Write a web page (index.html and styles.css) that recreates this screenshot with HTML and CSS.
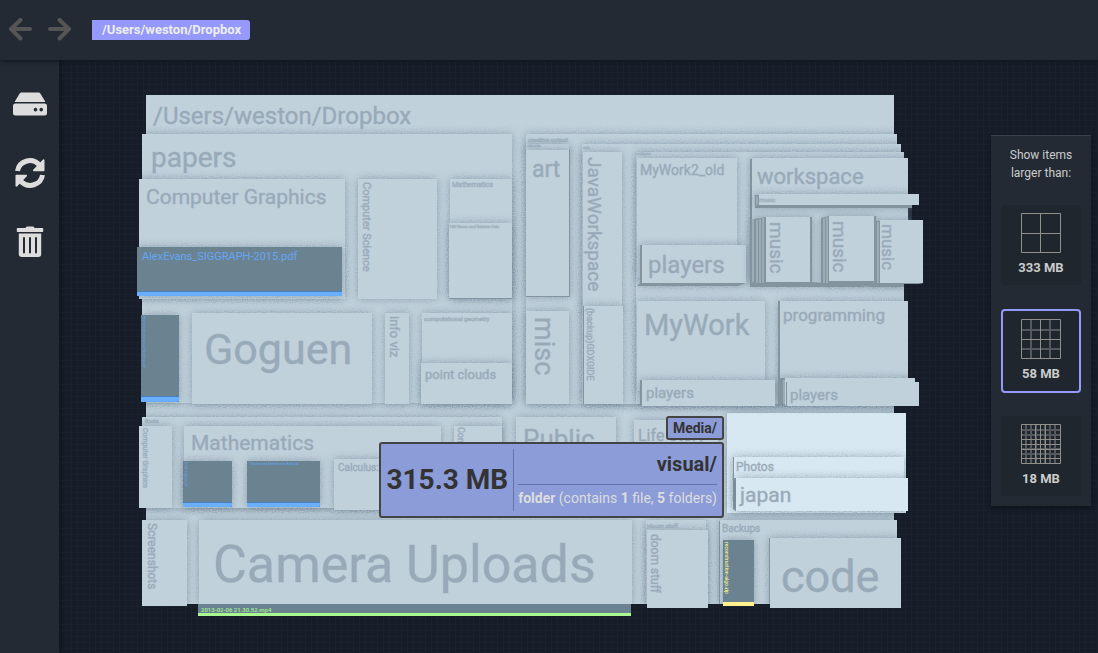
FILE: index.html
```html
<!DOCTYPE html>
<html lang="en">
<head>
<meta charset="utf-8">
<title>Disk usage map</title>
<link rel="stylesheet" href="styles.css">
</head>
<body>
<div class="app">
  <header class="topbar">
    <button class="nav-button" type="button" aria-label="Back">
      <svg width="24" height="24" viewBox="0 0 24 24"><path d="M21 11H2M11.500 2L2 11L11.500 20.500" class="arrow"/></svg>
    </button>
    <button class="nav-button" type="button" aria-label="Forward">
      <svg width="24" height="24" viewBox="0 0 24 24"><path d="M2 11H21M11.500 2L21 11L11.500 20.500" class="arrow"/></svg>
    </button>
    <a class="crumb" href="#root">/Users/weston/Dropbox</a>
  </header>

  <nav class="sidebar">
    <button class="tool" type="button" aria-label="Drives">
      <svg width="34" height="24" viewBox="0 0 34 24"><path class="glyph" fill-rule="evenodd" d="M8.500 0.500H25.500Q26.800 .5 27.500 1.700L32.200 9.500Q32 10 31 10H3Q2 10 1.800 9.500L6.500 1.700Q7.200 .5 8.500 .5ZM2.500 11.500H31.500Q34 11.500 34 14V21Q34 23.500 31.500 23.500H2.500Q0 23.500 0 21V14Q0 11.500 2.500 11.500ZM22.500 15.800a1.800 1.800 0 1 0 .01 0ZM28.200 15.800a1.800 1.800 0 1 0 .01 0Z"/></svg>
    </button>
    <button class="tool" type="button" aria-label="Refresh">
      <svg width="30" height="30" viewBox="0 0 30 30"><path d="M2.500 13A12.500 12 0 0 1 24 6.500M27.500 17A12.500 12 0 0 1 6 23.500" class="refresh"/><path class="glyph" d="M29.500 2V12.500Q29.500 13.200 28.800 13.200H18.500Q17.500 12.500 18.200 11.700L28 1.500Q29.200 1 29.500 2ZM.5 28V17.500Q.5 16.800 1.200 16.800H11.500Q12.500 17.500 11.800 18.300L2 28.500Q.8 29 .5 28Z"/></svg>
    </button>
    <button class="tool" type="button" aria-label="Trash">
      <svg width="28" height="32" viewBox="0 0 28 32"><path class="glyph" d="M9.500 2Q10 .5 11 .5H17Q18 .5 18.500 2H26.500Q27.200 2 27.200 2.800V5.200Q27.200 6 26.500 6H1.500Q.8 6 .8 5.200V2.800Q.8 2 1.500 2ZM2.800 7.500H25.200V28Q25.200 31 22.200 31H5.800Q2.800 31 2.800 28Z"/><path class="slots" d="M8 12V26.500M14 12V26.500M20 12V26.500"/></svg>
    </button>
  </nav>

  <main class="stage">
    <div class="map-area">
      <div class="map">
        <svg class="treemap" viewBox="125 88 801 537" role="img" aria-label="Folder map">
          <defs>
            <filter id="shade" filterUnits="userSpaceOnUse" x="120" y="80" width="820" height="550" color-interpolation-filters="sRGB">
              <feGaussianBlur in="SourceAlpha" stdDeviation="4" result="soft"/>
              <feTurbulence type="fractalNoise" baseFrequency="0.8" numOctaves="1" result="grain"/>
              <feDisplacementMap in="soft" in2="grain" scale="8" xChannelSelector="R" yChannelSelector="G" result="rough"/>
              <feFlood flood-color="#5f7484" flood-opacity="0.55"/>
              <feComposite in2="rough" operator="in" result="shadow"/>
              <feMerge><feMergeNode in="shadow"/><feMergeNode in="SourceGraphic"/></feMerge>
            </filter>
            <clipPath id="land"><path d="M146 95H894V134H897V144H901V152H904V158H908V194H919V205H912V220H923V284H904V301H908V378H915V382H919V406H894V413H906V478H908V511H906V513H894V520H897V538H901V608H770V604H754V606H723V604H708V608H647V604H631V616H198V604H187V606H142V520H146V508H139V426H142V417H146V402H141V315H142V299H139V296H137V247H139V179H142V134H146Z"/></clipPath>
          </defs>
          <g clip-path="url(#land)">
            <rect class="plate" x="146" y="95" width="748" height="509"/>
            <g filter="url(#shade)">
              <rect class="plate" x="142" y="134" width="370" height="269"/>
              <rect class="plate" x="526" y="134" width="371" height="270"/>
              <rect class="plate" x="142" y="417" width="360" height="91"/>
              <rect class="plate" x="516" y="417" width="100" height="91"/>
              <rect class="plate" x="634" y="420" width="84" height="90"/>
              <rect class="plate" x="142" y="520" width="45" height="86"/>
              <rect class="plate" x="199" y="520" width="433" height="84"/>
              <rect class="plate" x="646" y="520" width="60" height="84"/>
              <rect class="edge" x="719" y="521" width="2" height="84"/>
              <rect class="plate" x="720" y="520" width="177" height="85"/>
              <rect class="lit" x="727" y="413" width="179" height="100"/>
            </g>
            <g filter="url(#shade)">
              <rect class="plate" x="139" y="179" width="206" height="120"/>
              <rect class="plate" x="358" y="179" width="79" height="120"/>
              <rect class="plate" x="450" y="179" width="62" height="119"/>
              <rect class="plate" x="192" y="313" width="180" height="91"/>
              <rect class="plate" x="385" y="313" width="24" height="91"/>
              <rect class="plate" x="422" y="313" width="90" height="91"/>
              <rect class="plate" x="526" y="144" width="43" height="10"/>
              <rect class="plate" x="582" y="144" width="319" height="260"/>
              <rect class="plate" x="139" y="426" width="33" height="82"/>
              <rect class="plate" x="184" y="426" width="257" height="82"/>
              <rect class="plate" x="454" y="426" width="48" height="82"/>
              <rect class="edge" x="733" y="457" width="2" height="52"/>
              <rect class="lit" x="734" y="457" width="170" height="50"/>
            </g>
            <g filter="url(#shade)">
              <rect class="edge" x="449" y="223" width="63" height="76"/>
              <rect class="plate" x="449" y="223" width="63" height="75"/>
              <rect class="plate" x="421" y="363" width="91" height="41"/>
              <rect class="edge" x="526" y="150" width="44" height="147"/>
              <rect class="plate" x="526" y="150" width="43" height="146"/>
              <rect class="plate" x="526" y="311" width="43" height="93"/>
              <rect class="plate" x="583" y="152" width="39" height="160"/>
              <rect class="plate" x="636" y="152" width="268" height="252"/>
              <rect class="plate" x="334" y="459" width="100" height="51"/>
            </g>
            <g filter="url(#shade)">
              <rect class="edge" x="583" y="306" width="2" height="98"/>
              <rect class="plate" x="584" y="306" width="39" height="98"/>
              <rect class="plate" x="637" y="158" width="100" height="120"/>
              <rect class="edge" x="750" y="159" width="3" height="127"/>
              <rect class="plate" x="752" y="158" width="156" height="126"/>
              <rect class="plate" x="637" y="301" width="128" height="90"/>
              <rect class="edge" x="778" y="301" width="3" height="104"/>
              <rect class="plate" x="780" y="301" width="128" height="90"/>
            </g>
            <g filter="url(#shade)">
              <path class="edge" d="M640 245H746V283L738 286H637L640 283Z"/>
              <rect class="plate" x="642" y="245" width="104" height="38"/>
              <rect class="edge" x="640" y="380" width="3" height="25"/>
              <rect class="plate" x="642" y="380" width="133" height="26"/>
              <rect class="edge" x="778" y="378" width="8" height="27"/>
              <rect class="plate" x="785" y="378" width="130" height="27"/>
              <path class="edge" d="M755 195H919V205L914 208H755Z"/>
              <path class="rib" d="M757 196V205"/>
              <rect class="plate" x="759" y="194" width="160" height="11"/>
            </g>
            <g filter="url(#shade)">
              <path class="edge" d="M755 219L766 217H812V282L836 284H750V219Z"/>
              <path class="rib" d="M753 190V282M757 220V284M760 219V284M763 218V284"/>
              <rect class="plate" x="766" y="217" width="44" height="65"/>
              <path class="edge" d="M821 218L829 216H876V281L868 286H821Z"/>
              <path class="rib" d="M824 218V283M827 217V283"/>
              <rect class="plate" x="829" y="216" width="45" height="65"/>
              <path class="edge" d="M875 221H923V283L907 287H868L875 282Z"/>
              <path class="rib" d="M878 222V283"/>
              <rect class="plate" x="880" y="220" width="43" height="63"/>
            </g>
            <path class="edge" d="M750 283H880L862 287H750Z"/>
            <path class="rib" d="M784 380V404"/>
            <rect class="edge" x="786" y="382" width="2" height="24"/>
            <rect class="plate" x="787" y="382" width="132" height="24"/>
            <path class="edge" d="M733 478H736V511L733 509Z"/>
            <g filter="url(#shade)">
              <rect class="lit" x="736" y="478" width="172" height="33"/>
              <rect class="plate" x="647" y="530" width="61" height="78"/>
              <rect class="edge" x="769" y="538" width="2" height="70"/>
              <rect class="plate" x="770" y="538" width="131" height="70"/>
              <rect class="file" x="137" y="247" width="205" height="49"/>
              <rect class="file" x="141" y="315" width="38" height="87"/>
              <rect class="file" x="183" y="461" width="49" height="46"/>
              <rect class="file" x="247" y="461" width="73" height="46"/>
              <rect class="file" x="723" y="540" width="31" height="66"/>
            </g>
            <rect class="file" x="198" y="604" width="433" height="12"/>
            <path class="bar-line" d="M137 291H342V292H137ZM141 396H179V397H141ZM183 502H232V503H183ZM247 502H320V503H247Z"/>
            <path class="bar-blue" d="M137 292H342V296H137ZM141 397H179V401L176 402H141ZM183 503H232V506L230 507H183ZM247 503H320V506L318 507H247Z"/>
            <rect class="bar-green" x="198" y="613" width="433" height="3"/>
            <rect class="bar-yellow" x="723" y="602" width="31" height="4"/>
          </g>
          <g class="labels">
            <text x="153" y="124" font-size="24">/Users/weston/Dropbox</text>
            <text x="151" y="167" font-size="28">papers</text>
            <text x="146" y="204" font-size="21">Computer Graphics</text>
            <text transform="translate(363 182) rotate(90)" font-size="11">Computer Science</text>
            <text x="452" y="187" font-size="7">Mathematics</text>
            <text x="450" y="228" font-size="4">Diff Geom and Exterior Calc</text>
            <text x="528" y="142" font-size="6">creative output</text>
            <text x="527" y="147" font-size="3">unknowns</text>
            <text x="532" y="177" font-size="23">art</text>
            <text x="583" y="149" font-size="3">code</text>
            <text transform="translate(588 157) rotate(90)" font-size="19">JavaWorkspace</text>
            <text x="636" y="155" font-size="3">workspace</text>
            <text x="640" y="175" font-size="14">MyWork2_old</text>
            <text x="757" y="184" font-size="22">workspace</text>
            <text x="648" y="273" font-size="24">players</text>
            <text x="759" y="202" font-size="6">music</text>
            <text transform="translate(770 222) rotate(90)" font-size="19">music</text>
            <text transform="translate(833 221) rotate(90)" font-size="19">music</text>
            <text transform="translate(882 224) rotate(90)" font-size="17">music</text>
            <text x="204" y="364" font-size="43">Goguen</text>
            <text transform="translate(390 316) rotate(90)" font-size="13">info viz</text>
            <text x="424" y="321" font-size="6">computational geometry</text>
            <text x="425" y="379" font-size="13">point clouds</text>
            <text transform="translate(535 317) rotate(90)" font-size="27">misc</text>
            <text transform="translate(587 308) rotate(90)" font-size="9">(backup)GDXGIDE</text>
            <text x="644" y="335" font-size="29">MyWork</text>
            <text x="783" y="321" font-size="17">programming</text>
            <text x="646" y="398" font-size="15">players</text>
            <text x="790" y="400" font-size="15">players</text>
            <text x="145" y="423" font-size="5">Books</text>
            <text transform="translate(143 428) rotate(90)" font-size="7">Computer Graphics</text>
            <text x="191" y="450" font-size="21">Mathematics</text>
            <text x="338" y="471" font-size="10">Calculus:</text>
            <text transform="translate(458 427) rotate(90)" font-size="9">Computers</text>
            <text x="523" y="448" font-size="26">Public</text>
            <text x="638" y="441" font-size="16">Life Story</text>
            <text x="736" y="471" font-size="12">Photos</text>
            <text x="740" y="502" font-size="21">japan</text>
            <text transform="translate(148 523) rotate(90)" font-size="12">Screenshots</text>
            <text x="213" y="582" font-size="52">Camera Uploads</text>
            <text x="647" y="528" font-size="6">jdoom stuff</text>
            <text transform="translate(651 534) rotate(90)" font-size="12">doom stuff</text>
            <text x="722" y="532" font-size="10">Backups</text>
            <text x="781" y="592" font-size="45">code</text>
          </g>
          <g class="blue-labels">
            <text x="142" y="260" font-size="11">AlexEvans_SIGGRAPH-2015.pdf</text>
            <text transform="translate(143 316) rotate(90)" font-size="3">Real-time Geometry and Rendering.pdf</text>
            <text transform="translate(185 462) rotate(90)" font-size="3">Linear Algebra.pdf</text>
            <text x="250" y="465" font-size="3">The Amazing Mathematics Book.pdf</text>
          </g>
          <text class="green-label" x="201" y="612" font-size="6">2013-02-06 21.30.52.mp4</text>
          <text class="yellow-label" transform="translate(725 542) rotate(90)" font-size="5">reconstruction-algo.zip</text>
        </svg>
        <aside class="hover-info">
          <span class="parent">Media/</span>
          <div class="card">
            <strong class="size">315.3 MB</strong>
            <div class="detail">
              <strong class="name">visual/</strong>
              <span class="kind"><b>folder</b> (contains <b>1</b> file, <b>5</b> folders)</span>
            </div>
          </div>
        </aside>
      </div>
    </div>

    <section class="filter-panel">
      <h2 class="filter-title">Show items larger than:</h2>
      <button class="threshold" type="button">
        <svg width="40" height="40" viewBox="0 0 40 40"><path class="grid" d="M.5 .5H39.500V39.500H.5ZM19.500 0V40M0 20.500H40"/></svg>
        333 MB
      </button>
      <button class="threshold selected" type="button">
        <svg width="40" height="40" viewBox="0 0 40 40"><path class="grid-soft" d="M10 0V40M29 0V40M0 11H40M0 30H40"/><path class="grid" d="M.5 .5H39.500V39.500H.5ZM19.500 0V40M0 20.500H40"/></svg>
        58 MB
      </button>
      <button class="threshold" type="button">
        <svg width="40" height="40" viewBox="0 0 40 40"><path class="grid-soft" d="M5 0V40M10 0V40M15 0V40M24 0V40M29 0V40M34 0V40M0 6H40M0 11H40M0 25H40M0 30H40"/><path class="grid" d="M.5 .5H39.500V39.500H.5ZM19.500 0V40M14.500 0V40M24.500 0V40M0 15.500H40M0 20.500H40M0 25.500H40M0 34.500H40"/></svg>
        18 MB
      </button>
    </section>
  </main>
</div>
</body>
</html>
```
FILE: styles.css
```css
* { box-sizing: border-box; }
body {
  margin: 0;
  font-family: Roboto, "Liberation Sans", sans-serif;
  background: #171e2a;
}
button { border: 0; padding: 0; background: none; font: inherit; color: inherit; cursor: pointer; }
svg { display: block; }

.app {
  display: grid;
  grid-template: 60px 1fr / 59px 1fr;
  min-height: 100vh;
}
.topbar {
  grid-column: 1 / -1;
  display: flex;
  align-items: center;
  gap: 15px;
  padding-left: 9px;
  background: #232a33;
  box-shadow: 0 1px 4px #0e131b;
  z-index: 2;
}
.arrow { fill: none; stroke: #555; stroke-width: 4; stroke-linecap: round; stroke-linejoin: round; }
.crumb {
  margin-left: 5px;
  padding: 0 9px 0 10px;
  border-radius: 0 3px 3px 0;
  background: #9499fb;
  color: #eee;
  font-size: 13px;
  font-weight: 700;
  line-height: 20px;
  text-decoration: none;
}
.sidebar {
  display: flex;
  flex-direction: column;
  align-items: center;
  gap: 38px;
  padding-top: 28px;
  background: #232a33;
  box-shadow: 1px 0 4px #0e131b;
  z-index: 1;
}
.tool { display: grid; place-items: center; width: 40px; height: 31px; }
.glyph { fill: #ddd; }
.refresh { fill: none; stroke: #ddd; stroke-width: 5; }
.slots { stroke: #232a33; stroke-width: 2; stroke-linecap: round; }

.stage {
  display: flex;
  align-items: flex-start;
  min-width: 0;
  padding-right: 7px;
  background:
    repeating-linear-gradient(90deg, #1a212d 0 1px, transparent 1px 6px),
    repeating-linear-gradient(#1a212d 0 1px, transparent 1px 6px),
    #161c28;
}
.map-area { flex: 1; align-self: stretch; display: flex; align-items: center; justify-content: center; min-width: 0; padding-left: 1px; }
.map { position: relative; flex: 0 1 801px; }
.treemap { width: 100%; height: auto; }
.plate { fill: #c0d1dc; }
.lit { fill: #d8e8f2; }
.edge { fill: #84949f; }
.rib { fill: none; stroke: #b5c5cf; stroke-width: 1; }
.file { fill: #6b8390; }
.bar-line { fill: #4a7fc0; }
.bar-blue { fill: #6aaeff; }
.bar-green { fill: #a8fa90; }
.bar-yellow { fill: #fff28c; }
.labels { fill: #98a9b8; stroke: #98a9b8; stroke-width: 1; stroke-opacity: 0.4; }
.blue-labels { fill: #65a5f8; }
.green-label { fill: #a0f090; font-weight: 500; }
.yellow-label { fill: #f5ec8c; font-weight: 500; }

.hover-info {
  position: absolute;
  top: 328px;
  right: 202px;
  display: flex;
  flex-direction: column;
  align-items: flex-end;
  gap: 2px;
  color: #333;
}
.parent {
  padding: 0 5px;
  border: 2px solid #444;
  border-radius: 3px;
  background: #8b9cd8;
  font-size: 14px;
  font-weight: 700;
  line-height: 20px;
}
.card {
  display: flex;
  padding: 5px;
  border: 2px solid #444;
  border-radius: 3px;
  background: #8b9cd8;
  white-space: nowrap;
}
.size { padding-right: 5px; border-right: 1px solid #6571a8; font-size: 28px; line-height: 62px; }
.detail { display: flex; flex-direction: column; padding-left: 4px; text-align: right; }
.name { border-bottom: 1px solid #6571a8; font-size: 20px; line-height: 31px; padding-bottom: 4px; }
.kind { color: #ddd; font-size: 14px; line-height: 26px; }

.filter-panel {
  display: flex;
  flex-direction: column;
  align-items: center;
  width: 100px;
  margin-top: 75px;
  padding: 10px;
  border-top: 1px solid #3c424c;
  background: #232a33;
  box-shadow: 0 2px 4px #0e131b;
  color: #ccc;
}
.filter-title { margin: 0 0 23px; font-size: 12px; font-weight: 400; line-height: 18px; text-align: center; }
.threshold {
  display: flex;
  flex-direction: column;
  align-items: center;
  gap: 6px;
  width: 80px;
  height: 80px;
  padding-top: 8px;
  border-radius: 4px;
  background: #1f262e;
  font-size: 13px;
  font-weight: 700;
  line-height: 18px;
}
.threshold.selected { height: 84px; margin: 24px 0 23px; border: 2px solid #9499fb; }
.grid { fill: none; stroke: #908f8c; }
.grid-soft { fill: none; stroke: #55595d; stroke-width: 2; }
```
